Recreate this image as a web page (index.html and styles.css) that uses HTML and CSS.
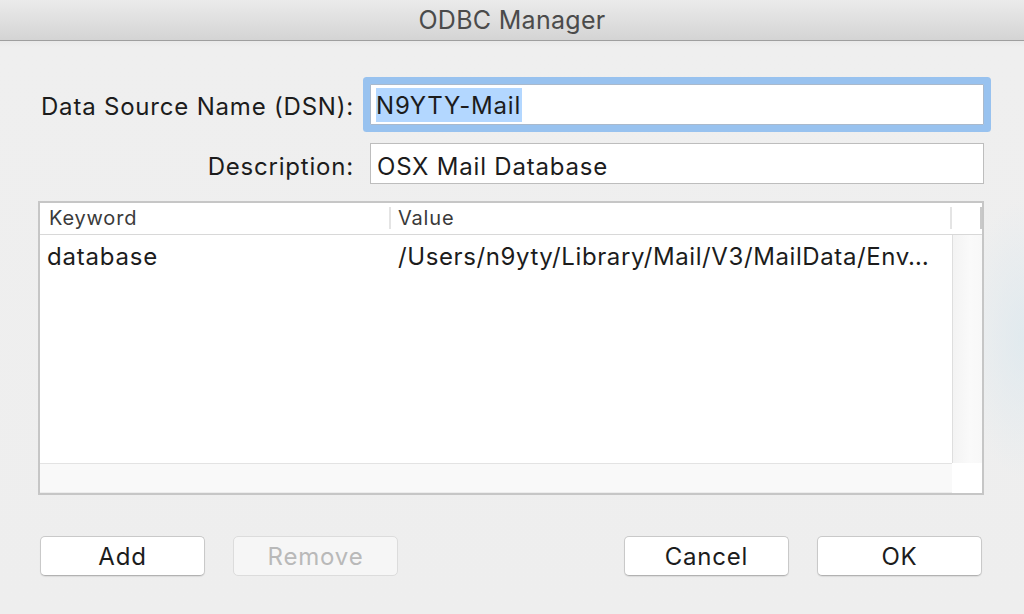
FILE: index.html
```html
<!DOCTYPE html>
<html lang="en">
<head>
<meta charset="utf-8">
<title>ODBC Manager</title>
<link rel="stylesheet" href="styles.css">
</head>
<body>
<div class="window">
  <header class="titlebar">ODBC Manager</header>
  <main class="content">
    <div class="form">
      <label class="label">Data Source Name (DSN):</label>
      <div class="field focused"><span class="sel">N9YTY-Mail</span></div>
      <label class="label">Description:</label>
      <div class="field">OSX Mail Database</div>
    </div>

    <div class="table">
      <div class="thead">
        <div class="th th-key">Keyword</div>
        <div class="sep"></div>
        <div class="th th-val">Value</div>
        <div class="sep"></div>
        <div class="th th-end"></div>
        <div class="sep dark"></div>
      </div>
      <div class="tbody">
        <div class="rows">
          <div class="row">
            <div class="td td-key">database</div>
            <div class="td td-val">/Users/n9yty/Library/Mail/V3/MailData/Env…</div>
          </div>
        </div>
        <div class="vscroll"></div>
      </div>
      <div class="tfoot">
        <div class="hscroll"></div>
        <div class="corner"></div>
      </div>
    </div>

    <div class="buttons">
      <div class="group">
        <button class="btn">Add</button>
        <button class="btn" disabled>Remove</button>
      </div>
      <div class="group">
        <button class="btn">Cancel</button>
        <button class="btn">OK</button>
      </div>
    </div>
  </main>
</div>
</body>
</html>
```

FILE: styles.css
```css
* { box-sizing: border-box; }

html, body {
  margin: 0;
  padding: 0;
}

body {
  width: 1024px;
  height: 614px;
  overflow: hidden;
  background: #eeeeee;
  font-family: Inter, "Noto Sans", "Liberation Sans", sans-serif;
  color: #1c1c1c;
}

.window {
  display: flex;
  flex-direction: column;
  height: 614px;
}

.titlebar {
  height: 41px;
  line-height: 41px;
  text-align: center;
  font-size: 25px;
  color: #4b4b4b;
  letter-spacing: 0.3px;
  background: linear-gradient(#ebebeb, #d4d4d4);
  border-bottom: 1px solid #9f9f9f;
  flex: none;
}

.content {
  flex: 1;
  padding: 43px 40px 0 38px;
  background:
    radial-gradient(ellipse 60px 140px at 100% 52%, rgba(220, 232, 238, 0.75), rgba(220, 232, 238, 0) 100%),
    linear-gradient(#e9e9e9, #efefef 6px, #eeeeee);
}

.form {
  display: grid;
  grid-template-columns: 316px 1fr;
  column-gap: 16px;
  row-gap: 18px;
  align-items: center;
}

.label {
  font-size: 24px;
  text-align: right;
  white-space: nowrap;
  letter-spacing: 0.8px;
  padding-top: 4px;
}

.label:nth-of-type(2) {
  padding-top: 6px;
}

.field {
  height: 41px;
  background: #ffffff;
  border: 1px solid #bdbdbd;
  font-size: 24px;
  line-height: 39px;
  padding: 3px 0 0 6px;
  letter-spacing: 0.8px;
  white-space: nowrap;
  color: #1c1c1c;
}

.field.focused {
  border-color: #a9b9cc;
  box-shadow: 0 0 0 7px #98c2ef;
  border-radius: 1px;
  padding-top: 0;
}

.sel {
  display: inline-block;
  background: #b3d7ff;
  line-height: 34px;
  padding: 1px 1px 0 0;
  height: 34px;
  vertical-align: top;
  margin-top: 3px;
  margin-left: -1px;
}

.table {
  margin-top: 17px;
  height: 294px;
  border: 2px solid #c6c6c6;
  background: #ffffff;
  display: flex;
  flex-direction: column;
}

.thead {
  height: 32px;
  flex: none;
  display: flex;
  align-items: stretch;
  border-bottom: 1px solid #d8d8d8;
}

.th {
  font-size: 20px;
  color: #3a3a3a;
  line-height: 31px;
  padding-left: 9px;
  letter-spacing: 0.8px;
}

.th-key { width: 349px; }
.th-val { width: 559px; padding-left: 7px; }
.th-end { width: 28px; }

.sep {
  width: 2px;
  margin: 4px 0 5px;
  background: #e4e4e4;
  flex: none;
}

.sep.dark { background: #c9c9c9; }

.tbody {
  flex: 1;
  display: flex;
}

.rows {
  flex: 1;
}

.row {
  display: flex;
  height: 43px;
  align-items: center;
}

.td {
  font-size: 24px;
  letter-spacing: 0.8px;
  white-space: nowrap;
  color: #1c1c1c;
}

.td-key {
  width: 349px;
  padding-left: 7px;
}

.td-val {
  flex: 1;
  padding-left: 9px;
  letter-spacing: 0.6px;
  overflow: hidden;
  text-overflow: ellipsis;
  padding-right: 4px;
}

.vscroll {
  width: 30px;
  flex: none;
  background: linear-gradient(90deg, #f3f3f3, #fafafa 60%, #f8f8f8);
  border-left: 1px solid #dedede;
}

.tfoot {
  height: 30px;
  flex: none;
  display: flex;
}

.hscroll {
  flex: 1;
  background: #f9f9f9;
  border-top: 1px solid #e3e3e3;
  border-bottom: 1px solid #ececec;
}

.corner {
  width: 30px;
  background: #ffffff;
}

.buttons {
  margin-top: 41px;
  padding: 0 2px;
  display: flex;
  justify-content: space-between;
}

.group {
  display: flex;
  gap: 28px;
}

.btn {
  width: 165px;
  height: 40px;
  font-family: inherit;
  font-size: 24px;
  letter-spacing: 0.8px;
  color: #1c1c1c;
  background: #ffffff;
  border: 1px solid #c9c9c9;
  border-bottom-color: #b2b2b2;
  border-radius: 5px;
  box-shadow: 0 1px 1px rgba(0, 0, 0, 0.08);
  padding: 2px 0 0;
  line-height: 36px;
}

.btn:disabled {
  background: #f6f6f6;
  color: #b9b9b9;
  border-color: #dcdcdc;
  box-shadow: none;
}
```
